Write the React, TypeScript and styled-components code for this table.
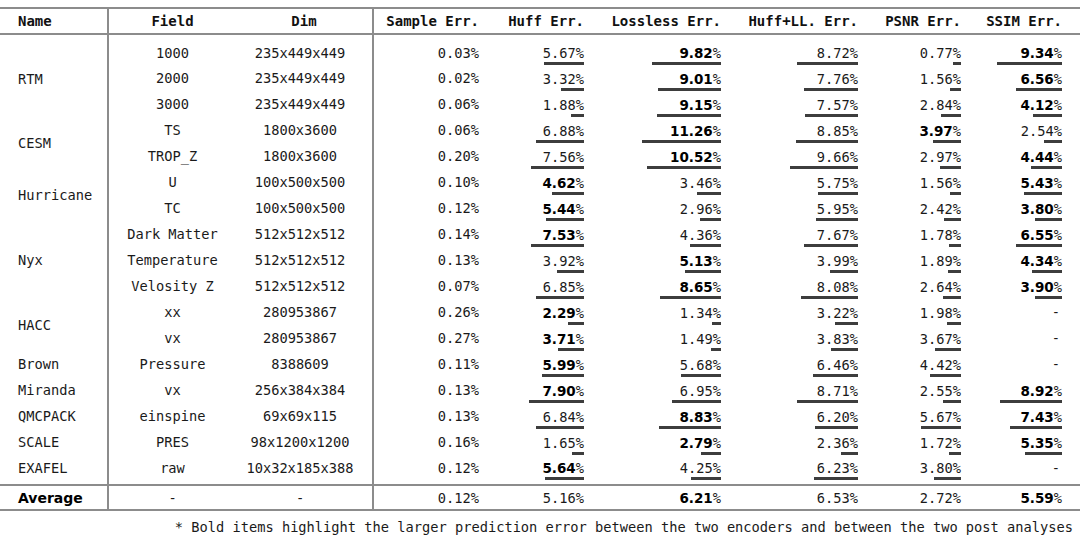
import React from "react";
import styled, { createGlobalStyle } from "styled-components";

const GlobalStyle = createGlobalStyle`
    body {
        margin: 0;
        background: #fff;
        font-family: "DejaVu Sans Mono", "Liberation Mono", monospace;
        color: #1a1a1a;
    }
`;

const Page = styled.div`
    width: 1080px;
    padding-top: 7px;
`;

const Table = styled.table`
    width: 1080px;
    border-collapse: collapse;
    table-layout: fixed;
    font-size: 13.7px;
    line-height: 16px;
`;

const HeadRow = styled.tr`
    height: 26px;
`;

const HeadCell = styled.th<{ $align: "left" | "center" | "right"; $rule?: boolean }>`
    font-family: "DejaVu Sans Mono", monospace;
    font-weight: 700;
    font-size: 14px;
    color: #111;
    text-align: ${(p) => p.$align};
    padding: ${(p) => (p.$align === "left" ? "0 0 0 18px" : p.$align === "right" ? "0 11px 0 0" : "0")};
    vertical-align: middle;
    border-top: 2px solid #8c8c8c;
    border-bottom: 2px solid #8c8c8c;
    border-right: ${(p) => (p.$rule ? "2px solid #8c8c8c" : "none")};

    &:last-child {
        padding-right: 18px;
    }
`;

const BodyRow = styled.tr`
    height: 26px;

    &:first-child {
        height: 31px;
    }
    &:first-child td {
        padding-top: 5px;
    }
    &:last-child {
        height: 30px;
    }
    &:last-child td {
        padding-bottom: 4px;
    }
`;

const NameCell = styled.td<{ $strong?: boolean }>`
    padding: 0 0 0 18px;
    text-align: left;
    vertical-align: middle;
    border-right: 2px solid #8c8c8c;
    font-family: ${(p) => (p.$strong ? '"DejaVu Sans", sans-serif' : '"DejaVu Sans Mono", monospace')};
    font-weight: ${(p) => (p.$strong ? 700 : 400)};
    font-size: ${(p) => (p.$strong ? "14px" : "13.7px")};
    color: ${(p) => (p.$strong ? "#000" : "#1a1a1a")};
`;

const CenterCell = styled.td<{ $rule?: boolean }>`
    padding: 0 ${(p) => (p.$rule ? "8px" : "0")} 0 0;
    text-align: center;
    vertical-align: middle;
    white-space: nowrap;
    border-right: ${(p) => (p.$rule ? "2px solid #8c8c8c" : "none")};
`;

const NumCell = styled.td`
    padding: 0 11px 0 0;
    text-align: right;
    vertical-align: middle;
    white-space: nowrap;

    &:last-child {
        padding-right: 18px;
    }
`;

const ValueStack = styled.span`
    display: inline-flex;
    flex-direction: column;
    align-items: flex-end;
    vertical-align: middle;
`;

const ValueText = styled.span`
    line-height: 16px;
`;

const BoldNum = styled.b`
    font-family: "DejaVu Sans", sans-serif;
    font-weight: 700;
    font-size: 13.5px;
    color: #000;
`;

const Bar = styled.span`
    display: block;
    height: 3px;
    margin-top: 1px;
    margin-bottom: -4px;
    background: #3d3d3d;
`;

const Dash = styled.span`
    padding-right: 2px;
`;

const AverageRow = styled.tr`
    height: 25px;

    td {
        border-top: 2px solid #8c8c8c;
        border-bottom: 2px solid #8c8c8c;
    }
`;

const Footnote = styled.div`
    text-align: right;
    padding: 8px 7px 0 0;
    font-size: 13.7px;
    line-height: 16px;
    color: #1a1a1a;
    white-space: nowrap;
`;

type Val = { v: number; b?: boolean } | null;

type Row = {
    name?: string;
    span?: number;
    field: string;
    dim: string;
    sample: string;
    vals: Val[];
};

const n = (v: number, b?: boolean): Val => ({ v, b });

const rows: Row[] = [
    { name: "RTM", span: 3, field: "1000", dim: "235x449x449", sample: "0.03%", vals: [n(5.67), n(9.82, true), n(8.72), n(0.77), n(9.34, true)] },
    { field: "2000", dim: "235x449x449", sample: "0.02%", vals: [n(3.32), n(9.01, true), n(7.76), n(1.56), n(6.56, true)] },
    { field: "3000", dim: "235x449x449", sample: "0.06%", vals: [n(1.88), n(9.15, true), n(7.57), n(2.84), n(4.12, true)] },
    { name: "CESM", span: 2, field: "TS", dim: "1800x3600", sample: "0.06%", vals: [n(6.88), n(11.26, true), n(8.85), n(3.97, true), n(2.54)] },
    { field: "TROP_Z", dim: "1800x3600", sample: "0.20%", vals: [n(7.56), n(10.52, true), n(9.66), n(2.97), n(4.44, true)] },
    { name: "Hurricane", span: 2, field: "U", dim: "100x500x500", sample: "0.10%", vals: [n(4.62, true), n(3.46), n(5.75), n(1.56), n(5.43, true)] },
    { field: "TC", dim: "100x500x500", sample: "0.12%", vals: [n(5.44, true), n(2.96), n(5.95), n(2.42), n(3.8, true)] },
    { name: "Nyx", span: 3, field: "Dark Matter", dim: "512x512x512", sample: "0.14%", vals: [n(7.53, true), n(4.36), n(7.67), n(1.78), n(6.55, true)] },
    { field: "Temperature", dim: "512x512x512", sample: "0.13%", vals: [n(3.92), n(5.13, true), n(3.99), n(1.89), n(4.34, true)] },
    { field: "Velosity Z", dim: "512x512x512", sample: "0.07%", vals: [n(6.85), n(8.65, true), n(8.08), n(2.64), n(3.9, true)] },
    { name: "HACC", span: 2, field: "xx", dim: "280953867", sample: "0.26%", vals: [n(2.29, true), n(1.34), n(3.22), n(1.98), null] },
    { field: "vx", dim: "280953867", sample: "0.27%", vals: [n(3.71, true), n(1.49), n(3.83), n(3.67), null] },
    { name: "Brown", span: 1, field: "Pressure", dim: "8388609", sample: "0.11%", vals: [n(5.99, true), n(5.68), n(6.46), n(4.42), null] },
    { name: "Miranda", span: 1, field: "vx", dim: "256x384x384", sample: "0.13%", vals: [n(7.9, true), n(6.95), n(8.71), n(2.55), n(8.92, true)] },
    { name: "QMCPACK", span: 1, field: "einspine", dim: "69x69x115", sample: "0.13%", vals: [n(6.84), n(8.83, true), n(6.2), n(5.67), n(7.43, true)] },
    { name: "SCALE", span: 1, field: "PRES", dim: "98x1200x1200", sample: "0.16%", vals: [n(1.65), n(2.79, true), n(2.36), n(1.72), n(5.35, true)] },
    { name: "EXAFEL", span: 1, field: "raw", dim: "10x32x185x388", sample: "0.12%", vals: [n(5.64, true), n(4.25), n(6.23), n(3.8), null] },
];

const average: Val[] = [n(5.16), n(6.21, true), n(6.53), n(2.72), n(5.59, true)];

const PX_PER_PERCENT = 7;

const Percent = ({ val }: { val: { v: number; b?: boolean } }) => {
    const text = val.v.toFixed(2);
    return (
        <ValueText>
            {val.b ? <BoldNum>{text}</BoldNum> : text}%
        </ValueText>
    );
};

const BarValue = ({ val }: { val: Val }) => {
    if (!val) return <Dash>-</Dash>;
    return (
        <ValueStack>
            <Percent val={val} />
            <Bar style={{ width: Math.max(8, val.v * PX_PER_PERCENT) }} />
        </ValueStack>
    );
};

const headers = ["Sample Err.", "Huff Err.", "Lossless Err.", "Huff+LL. Err.", "PSNR Err.", "SSIM Err."];

const App = () => {
    return (
        <Page>
            <GlobalStyle />
            <Table>
                <colgroup>
                    <col style={{ width: 108 }} />
                    <col style={{ width: 128 }} />
                    <col style={{ width: 137 }} />
                    <col style={{ width: 117 }} />
                    <col style={{ width: 105 }} />
                    <col style={{ width: 137 }} />
                    <col style={{ width: 137 }} />
                    <col style={{ width: 103 }} />
                    <col style={{ width: 108 }} />
                </colgroup>
                <thead>
                    <HeadRow>
                        <HeadCell $align="left" $rule>
                            Name
                        </HeadCell>
                        <HeadCell $align="center">Field</HeadCell>
                        <HeadCell $align="center" $rule>
                            Dim
                        </HeadCell>
                        {headers.map((h) => (
                            <HeadCell key={h} $align="right">
                                {h}
                            </HeadCell>
                        ))}
                    </HeadRow>
                </thead>
                <tbody>
                    {rows.map((r, i) => (
                        <BodyRow key={i}>
                            {r.name && <NameCell rowSpan={r.span}>{r.name}</NameCell>}
                            <CenterCell>{r.field}</CenterCell>
                            <CenterCell $rule>{r.dim}</CenterCell>
                            <NumCell>{r.sample}</NumCell>
                            {r.vals.map((v, j) => (
                                <NumCell key={j}>
                                    <BarValue val={v} />
                                </NumCell>
                            ))}
                        </BodyRow>
                    ))}
                </tbody>
                <tbody>
                    <AverageRow>
                        <NameCell $strong>Average</NameCell>
                        <CenterCell>-</CenterCell>
                        <CenterCell $rule>-</CenterCell>
                        <NumCell>0.12%</NumCell>
                        {average.map((v, j) => (
                            <NumCell key={j}>{v && <Percent val={v} />}</NumCell>
                        ))}
                    </AverageRow>
                </tbody>
            </Table>
            <Footnote>
                * Bold items highlight the larger prediction error between the two encoders and between the two post analyses
            </Footnote>
        </Page>
    );
};

export default App;
